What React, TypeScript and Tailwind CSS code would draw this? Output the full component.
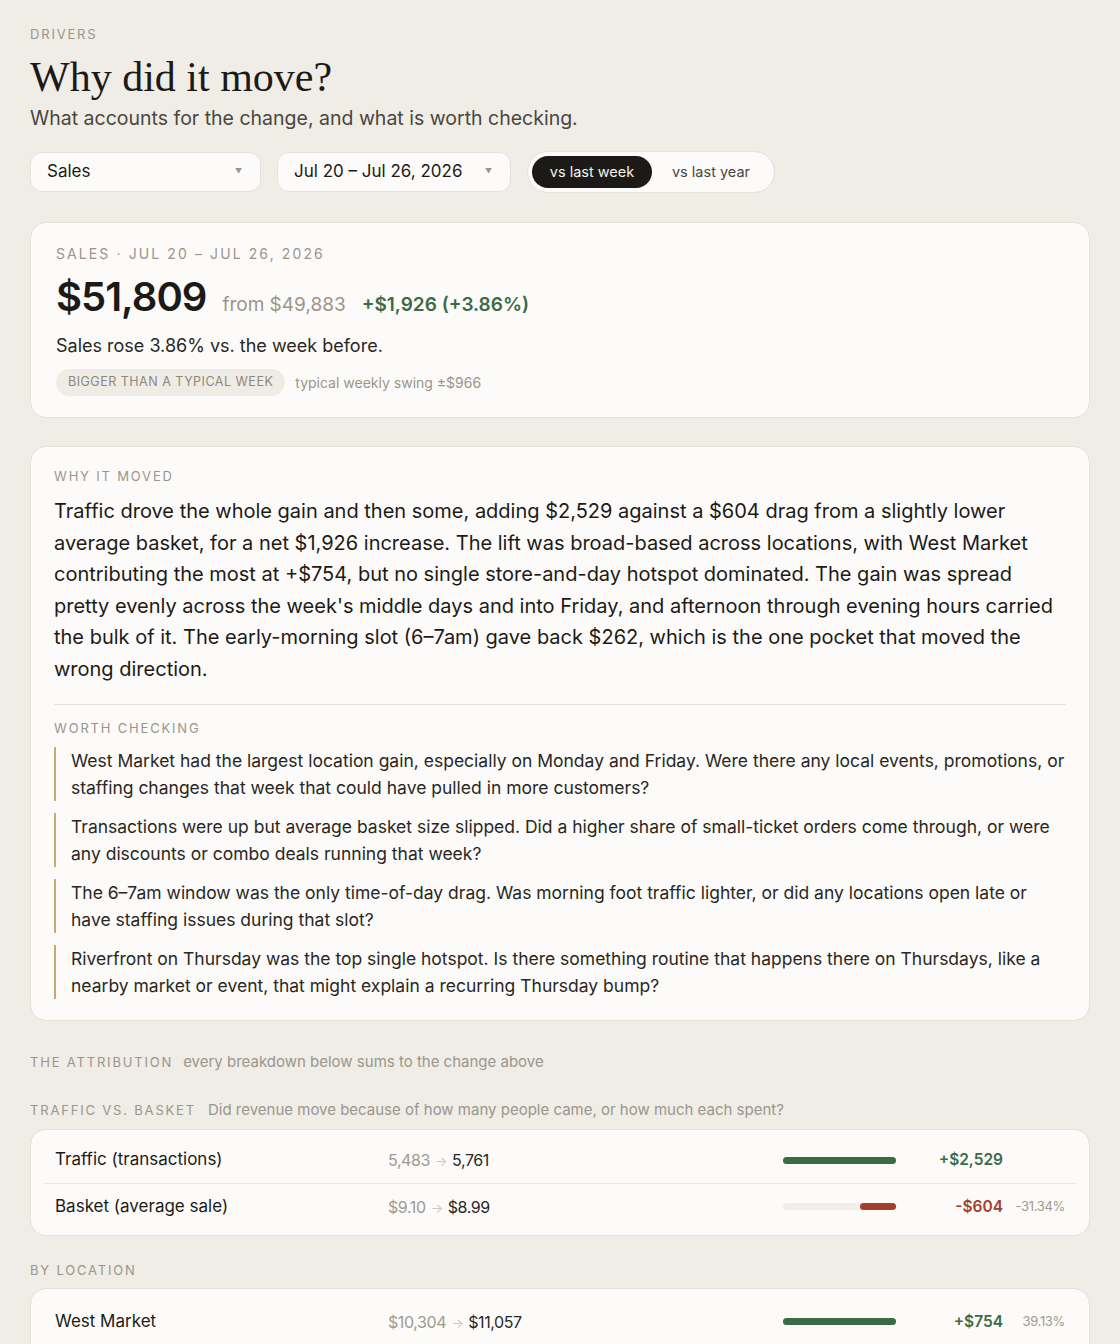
import { ReactNode } from "react";

const sans = "font-['Inter','Noto_Sans',sans-serif]";

const Eyebrow = ({ children, className = "" }: { children: ReactNode; className?: string }) => (
  <div className={`text-[13px] uppercase tracking-[0.14em] text-[#9a958c] ${className}`}>{children}</div>
);

const Select = ({ label, width }: { label: string; width: string }) => (
  <div
    className={`${width} h-10 flex items-center justify-between pl-4 pr-[18px] rounded-xl bg-[#fcfbf9] border border-[#e6e2da] text-[17px] text-[#1c1a17]`}
  >
    <span>{label}</span>
    <span className="text-[7px] text-[#9a958c]">▼</span>
  </div>
);

type Row = {
  label: string;
  from: string;
  to: string;
  bar: number;
  up: boolean;
  delta: string;
  pct?: string;
};

const Bar = ({ value, up }: { value: number; up: boolean }) => (
  <div className="w-[113px] h-[7px] rounded-full bg-[#f0eeea] flex justify-end">
    <div
      className={`h-full rounded-full ${up ? "bg-[#3b6b45]" : "bg-[#a0412c]"}`}
      style={{ width: `${value * 100}%` }}
    />
  </div>
);

const AttrTable = ({ rows, pad = "pt-[7px] pb-[6px]" }: { rows: Row[]; pad?: string }) => (
  <div className={`rounded-2xl bg-[#fcfbf9] border border-[#e6e2da] px-3 ${pad}`}>
    {rows.map((r, i) => (
      <div
        key={r.label}
        className={`flex items-center h-[46px] px-3 ${i > 0 ? "border-t border-[#ebe8e1]" : ""}`}
      >
        <div className="w-[333px] text-[17px] text-[#1c1a17]">{r.label}</div>
        <div className="flex-1 text-[16px] tracking-tight">
          <span className="text-[#a09a90]">{r.from}</span>
          <span className="text-[#cdc8bf] text-[13px] mx-[5px]">→</span>
          <span className="text-[#2a2723]">{r.to}</span>
        </div>
        <Bar value={r.bar} up={r.up} />
        <div
          className={`w-[107px] text-right text-[15.5px] font-semibold ${r.up ? "text-[#3b6b45]" : "text-[#a0412c]"}`}
        >
          {r.delta}
        </div>
        <div className="w-[62px] text-right text-[13px] tracking-tight text-[#a09a90]">{r.pct ?? ""}</div>
      </div>
    ))}
  </div>
);

const checks = [
  "West Market had the largest location gain, especially on Monday and Friday. Were there any local events, promotions, or staffing changes that week that could have pulled in more customers?",
  "Transactions were up but average basket size slipped. Did a higher share of small-ticket orders come through, or were any discounts or combo deals running that week?",
  "The 6–7am window was the only time-of-day drag. Was morning foot traffic lighter, or did any locations open late or have staffing issues during that slot?",
  "Riverfront on Thursday was the top single hotspot. Is there something routine that happens there on Thursdays, like a nearby market or event, that might explain a recurring Thursday bump?",
];

export default function App() {
  return (
    <div className={`min-h-screen bg-[#f0ede7] ${sans} text-[#1c1a17] px-[30px] pt-[25px] pb-10`}>
      <Eyebrow>Drivers</Eyebrow>
      <h1 className="mt-[6px] font-['Liberation_Serif',serif] text-[42px] leading-[52px] text-[#1c1a17]">
        Why did it move?
      </h1>
      <p className="mt-[1px] text-[19.5px] text-[#4a4640]">What accounts for the change, and what is worth checking.</p>

      <div className="mt-[18px] flex items-center gap-4">
        <Select label="Sales" width="w-[231px]" />
        <Select label="Jul 20 – Jul 26, 2026" width="w-[234px]" />
        <div className="h-[42px] w-[248px] flex items-center p-1 rounded-full bg-[#fcfbf9] border border-[#e6e2da] text-[14.5px]">
          <div className="h-8 w-[120px] rounded-full bg-[#1c1a17] text-[#f5f2ec] flex items-center justify-center">
            vs last week
          </div>
          <div className="flex-1 text-center text-[#4a4640]">vs last year</div>
        </div>
      </div>

      <div className="mt-[29px] rounded-2xl bg-[#fcfbf9] border border-[#e6e2da] px-[25px] pt-[20px] pb-[21px]">
        <Eyebrow className="text-[14px] tracking-[0.15em]">Sales · Jul 20 – Jul 26, 2026</Eyebrow>
        <div className="mt-[8px] flex items-baseline gap-4">
          <span className="text-[40px] font-semibold leading-[50px] tracking-tight">$51,809</span>
          <span className="text-[19px] text-[#9a958c]">from $49,883</span>
          <span className="text-[19px] font-semibold text-[#3b6b45]">+$1,926 (+3.86%)</span>
        </div>
        <p className="mt-[10px] text-[18px] text-[#2a2723]">Sales rose 3.86% vs. the week before.</p>
        <div className="mt-[10px] flex items-center gap-[10px]">
          <span className="rounded-full bg-[#efece5] px-3 py-[4px] text-[12.5px] uppercase tracking-[0.04em] text-[#8d877d]">
            Bigger than a typical week
          </span>
          <span className="text-[14px] text-[#9a958c]">typical weekly swing ±$966</span>
        </div>
      </div>

      <div className="mt-[28px] rounded-2xl bg-[#fcfbf9] border border-[#e6e2da] px-[23px] pt-[20px] pb-[21px]">
        <Eyebrow className="text-[13.5px]">Why it moved</Eyebrow>
        <p className="mt-[10px] text-[20px] leading-[31.6px] text-[#1c1a17]">
          Traffic drove the whole gain and then some, adding $2,529 against a $604 drag from a slightly lower average
          basket, for a net $1,926 increase. The lift was broad-based across locations, with West Market contributing
          the most at +$754, but no single store-and-day hotspot dominated. The gain was spread pretty evenly across the
          week's middle days and into Friday, and afternoon through evening hours carried the bulk of it. The
          early-morning slot (6–7am) gave back $262, which is the one pocket that moved the wrong direction.
        </p>
        <div className="mt-[18px] border-t border-[#e6e2da]" />
        <Eyebrow className="mt-[14px] text-[13.5px]">Worth checking</Eyebrow>
        <div className="mt-[9px] flex flex-col gap-[12px]">
          {checks.map((c) => (
            <div key={c} className="border-l-2 border-[#c9a878] pl-[15px] text-[17.5px] leading-[27px] text-[#2a2723]">
              {c}
            </div>
          ))}
        </div>
      </div>

      <div className="mt-[30px] flex items-baseline gap-[10px]">
        <Eyebrow className="text-[13.5px]">The attribution</Eyebrow>
        <span className="text-[15px] text-[#9a958c]">every breakdown below sums to the change above</span>
      </div>

      <div className="mt-[25px] flex items-baseline gap-[12px]">
        <Eyebrow className="text-[13.5px]">Traffic vs. basket</Eyebrow>
        <span className="text-[15px] text-[#9a958c]">
          Did revenue move because of how many people came, or how much each spent?
        </span>
      </div>
      <div className="mt-[8px]">
        <AttrTable
          rows={[
            { label: "Traffic (transactions)", from: "5,483", to: "5,761", bar: 1, up: true, delta: "+$2,529" },
            {
              label: "Basket (average sale)",
              from: "$9.10",
              to: "$8.99",
              bar: 0.32,
              up: false,
              delta: "-$604",
              pct: "-31.34%",
            },
          ]}
        />
      </div>

      <Eyebrow className="mt-[25px] text-[13.5px]">By location</Eyebrow>
      <div className="mt-[7px]">
        <AttrTable
          pad="pt-[10px] pb-[6px]"
          rows={[
            {
              label: "West Market",
              from: "$10,304",
              to: "$11,057",
              bar: 1,
              up: true,
              delta: "+$754",
              pct: "39.13%",
            },
            {
              label: "Riverfront",
              from: "$9,871",
              to: "$10,402",
              bar: 0.7,
              up: true,
              delta: "+$531",
              pct: "27.57%",
            },
          ]}
        />
      </div>
    </div>
  );
}
